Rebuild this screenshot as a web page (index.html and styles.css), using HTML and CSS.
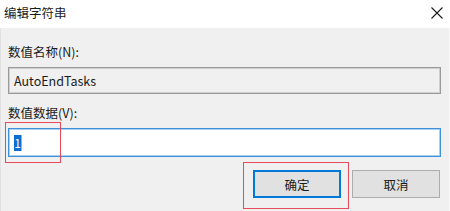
FILE: index.html
```html
<!DOCTYPE html>
<html lang="zh-CN">
<head>
<meta charset="utf-8">
<title>编辑字符串</title>
<link rel="stylesheet" href="styles.css">
</head>
<body>
<div class="window">
  <div class="titlebar">
    <span class="title">编辑字符串</span>
    <svg class="close" width="12" height="12" viewBox="0 0 12 12"><path d="M0.5 0.5 L11.5 11.5 M11.5 0.5 L0.5 11.5" stroke="#1a1a1a" stroke-width="1.1" fill="none"/></svg>
  </div>
  <div class="content">
    <div class="label">数值名称(N):</div>
    <div class="field readonly">AutoEndTasks</div>
    <div class="label second">数值数据(V):</div>
    <div class="field edit"><span class="sel">1</span><span class="caret"></span></div>
    <div class="buttons">
      <div class="btn default">确定</div>
      <div class="btn">取消</div>
    </div>
  </div>
  <div class="mark mark-input"></div>
  <div class="mark mark-ok"></div>
</div>
</body>
</html>
```

FILE: styles.css
```css
html, body {
  margin: 0;
  padding: 0;
}
body {
  width: 450px;
  height: 211px;
  overflow: hidden;
  font-family: "Noto Sans CJK SC", "Noto Sans", sans-serif;
  font-size: 12px;
  color: #1a1a1a;
}
.window {
  position: relative;
  width: 450px;
  height: 211px;
  background: #f0f0f0;
  box-sizing: border-box;
  border-left: 1px solid #e2e2e2;
  border-right: 1px solid #fafafa;
}
.titlebar {
  height: 28px;
  background: #ffffff;
  display: flex;
  align-items: center;
  justify-content: space-between;
  padding: 0 7px 0 4px;
  margin-left: -1px;
  margin-right: -1px;
}
.title {
  font-size: 12.5px;
  line-height: 16px;
  margin-top: -2px;
}
.close {
  margin-top: -3px;
}
.content {
  padding: 16px 8px 0 7px;
  display: flex;
  flex-direction: column;
}
.label {
  height: 16px;
  line-height: 16px;
  font-size: 12.5px;
}
.label.second {
  margin-top: 11px;
}
.field {
  box-sizing: border-box;
  width: 433px;
  display: flex;
  align-items: center;
  padding-left: 5px;
  font-size: 12.5px;
}
.readonly {
  margin-top: 7px;
  height: 27px;
  border: 1px solid #9a9a9a;
  box-shadow: inset 0 0 0 1px #cfcfcf;
  background: #f0f0f0;
}
.edit {
  margin-top: 7px;
  height: 29px;
  border: 1px solid #3e91d8;
  box-shadow: inset 0 0 0 1px #a9d0f0;
  background: #ffffff;
}
.sel {
  display: inline-block;
  background: #0a6fd0;
  color: #ffffff;
  width: 7px;
  height: 16px;
  line-height: 16px;
  text-align: center;
  font-size: 12px;
}
.caret {
  display: inline-block;
  width: 1px;
  height: 16px;
  background: #e8a050;
}
.buttons {
  margin-top: 13px;
  display: flex;
  justify-content: flex-end;
  gap: 11px;
  padding-right: 1px;
}
.btn {
  box-sizing: border-box;
  width: 88px;
  height: 28px;
  background: #e1e1e1;
  border: 1px solid #adadad;
  display: flex;
  align-items: center;
  justify-content: center;
  font-size: 12.5px;
}
.btn.default {
  border: 2px solid #0078d7;
}
.mark {
  position: absolute;
  box-sizing: border-box;
  border: 1.5px solid #e64a5b;
}
.mark-input {
  left: 4px;
  top: 122px;
  width: 56px;
  height: 41px;
}
.mark-ok {
  left: 242px;
  top: 162px;
  width: 106px;
  height: 47px;
}
```
